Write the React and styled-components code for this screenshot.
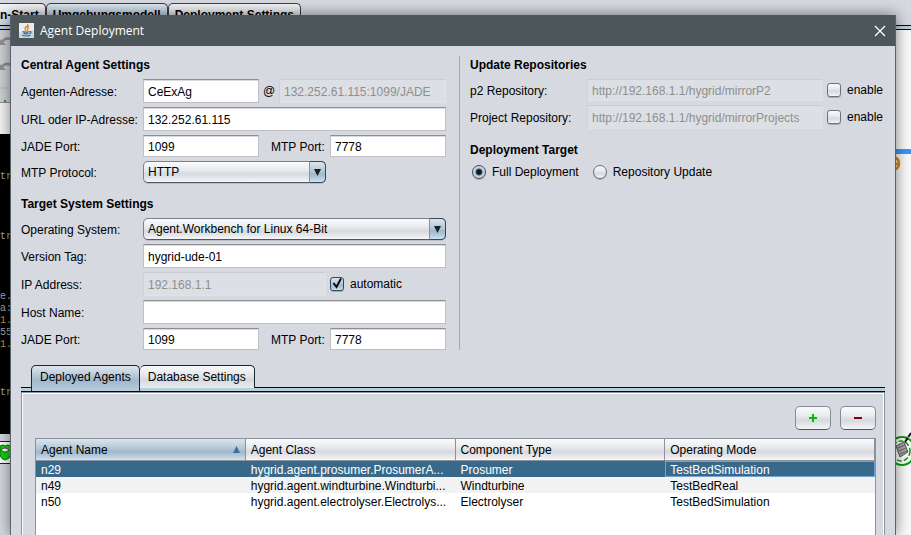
import React from "react";
import styled, { createGlobalStyle, css } from "styled-components";

const INK = "#000";
const PANEL = "#d6d9e0";
const BUTTON_FACE =
  "linear-gradient(#fbfbfc 0%, #e8eaed 40%, #d6d9de 60%, #e4e6ea 80%, #f6f7f9 100%)";
const BLUE_FACE =
  "linear-gradient(#dbe5ed 0%, #b4c7d6 45%, #a2b8cb 60%, #b3cadb 80%, #cfe4f2 100%)";

const GlobalStyle = createGlobalStyle`
  *, *::before, *::after { box-sizing: border-box; }
  html, body { margin: 0; overflow: hidden; }
  body {
    background: ${PANEL};
    color: ${INK};
    font: 12px/16px "Liberation Sans", Arial, sans-serif;
  }
  input, select, button { font: inherit; color: inherit; margin: 0; }
`;

/* ---------- application window behind the dialog ---------- */

const Desktop = styled.div`
  position: relative;
  height: 100vh;
  overflow: hidden;
`;

const Workbench = styled.div`
  height: 100%;
  display: flex;
  flex-direction: column;
`;

const WorkbenchTabs = styled.div`
  display: flex;
  padding-top: 3px;
  background: ${PANEL};
`;

const WorkbenchTab = styled.button`
  height: 22px;
  padding: ${(p) => (p.$first ? "0 6px 0 0" : "0 6px")};
  border: 1px solid #3a3e45;
  border-bottom: 0;
  border-left-width: ${(p) => (p.$first ? 0 : 1)}px;
  border-radius: ${(p) => (p.$first ? "0 5px 0 0" : "5px 5px 0 0")};
  background: ${(p) => (p.$active ? "linear-gradient(#dbe5ed, #a2b8cb)" : "linear-gradient(#f3f4f6, #d2d5db)")};
  font-weight: bold;
  line-height: 22px;
  white-space: nowrap;
`;

const TabRule = styled.div`
  height: 5px;
  flex: none;
  border: solid #05060f;
  border-width: 1px 0;
  background: #b9cfdd;
`;

const WorkArea = styled.div`
  flex: 1;
  min-height: 0;
  display: flex;
  justify-content: space-between;
  background: #fafafa;
`;

const LeftDock = styled.div`
  width: 24px;
  display: flex;
  flex-direction: column;
  overflow: hidden;
  background: ${PANEL};
`;

const DockTools = styled.div`
  height: 73px;
  border-bottom: 1px solid #8d9096;
  background: #d0d2d6;
`;

const DockPage = styled.div`
  height: 31px;
  background: #f7f7f7;
`;

const Console = styled.div`
  height: 300px;
  padding-top: 37px;
  background: #000;
  font: 10px/12px "Liberation Mono", monospace;
`;

const ConsoleLine = styled.div`
  height: 12px;
  color: ${(p) => (p.$warn ? "#d0903c" : "#a0a8b0")};
`;

const DockStatus = styled.div`
  margin-top: 7px;
  height: 23px;
  border: solid #202020;
  border-width: 1px 0;
  background: #fff;
`;

const RightDock = styled.div`
  width: 20px;
  background: #fafafa;
`;

const LinkBar = styled.div`
  height: 5px;
  margin-top: 119px;
  background: #3a97f5;
`;

const NodeMark = styled.svg`
  display: block;
  width: 20px;
  height: ${(p) => p.$h}px;
  margin-top: ${(p) => p.$gap}px;
`;

/* ---------- dialog frame ---------- */

const Dialog = styled.section`
  position: absolute;
  inset: 15px 15px 0 10px;
  display: flex;
  flex-direction: column;
  border: solid #59636a;
  border-width: 0 1px;
  background: ${PANEL};
  box-shadow: 0 0 14px rgba(0, 0, 0, 0.5);
`;

const TitleBar = styled.header`
  height: 31px;
  flex: none;
  display: flex;
  align-items: center;
  gap: 6px;
  padding: 0 9px 0 8px;
  background: #4c565b;
  color: #fff;
`;

const Title = styled.h1`
  flex: 1;
  margin: 0;
  font: 12px/16px "Open Sans", "Noto Sans", sans-serif;
`;

const CloseButton = styled.button`
  display: flex;
  padding: 0;
  border: 0;
  background: none;
`;

const DialogBody = styled.div`
  flex: 1;
  min-height: 0;
  display: flex;
  flex-direction: column;
  padding: 10px 10px 0;
`;

/* ---------- settings forms ---------- */

const SettingsGrid = styled.div`
  display: grid;
  grid-template-columns: minmax(0, 438fr) 1px minmax(0, 425fr);
`;

const SettingsColumn = styled.div`
  display: flex;
  flex-direction: column;
  gap: 4px;
  padding: ${(p) => (p.$side === "left" ? "0 13px 0 0" : "0 0 0 10px")};
`;

const Divider = styled.div`
  background: #a3a7b0;
`;

const Heading = styled.h2`
  height: 19px;
  margin: ${(p) => (p.$spaced ? 8 : 0)}px 0 0;
  font-size: 12px;
  line-height: 18px;
`;

const Row = styled.div`
  display: flex;
  align-items: center;
`;

const Label = styled.label`
  flex: none;
  width: ${(p) => p.$width}px;
  padding-top: 2px;
  line-height: 18px;
  white-space: nowrap;
`;

const MiddleLabel = styled(Label)`
  width: 71px;
  padding-left: 12px;
`;

const AtSign = styled.span`
  flex: none;
  width: 20px;
  text-align: center;
`;

const TextField = styled.input.attrs({ type: "text" })`
  flex: 1 1 0;
  min-width: 0;
  height: ${(p) => (p.$low ? 22 : 24)}px;
  padding: 1px 4px 0;
  border: 1px solid #c0c0c4;
  border-top-color: #8d8e8f;
  border-radius: 0;
  outline: 0;
  background: #fff;
  box-shadow: inset 0 1px 0 #d9dade;

  &:disabled {
    color: #8e8f91;
    -webkit-text-fill-color: #8e8f91;
    background: #dcdfe3;
    border-color: #cacdd2 #e0e2e6 #e0e2e6 #cdd0d6;
    box-shadow: none;
  }
`;

const AddressField = styled(TextField)`
  flex: 0 0 116px;
`;

const SelectBox = styled.div`
  position: relative;
  flex: 1;
  display: flex;
`;

const Select = styled.select`
  appearance: none;
  width: 100%;
  height: 22px;
  padding: 0 22px 0 4px;
  border: 1px solid #7c828c;
  border-bottom-color: #4f5661;
  border-radius: 5px;
  outline: 0;
  background: ${BUTTON_FACE};
  box-shadow: 0 1px 0 #b9bdc6;
`;

const SelectArrow = styled.span`
  position: absolute;
  inset: 0 0 0 auto;
  width: 17px;
  display: grid;
  place-items: center;
  border: 1px solid #33475b;
  border-left-color: #7f95a8;
  border-radius: 0 5px 5px 0;
  background: ${BLUE_FACE};
  pointer-events: none;
`;

const Spacer = styled.div`
  flex: none;
  width: 120px;
`;

const Option = styled.label`
  flex: none;
  display: flex;
  align-items: center;
  gap: 6px;
  ${(p) =>
    p.$width &&
    css`
      width: ${p.$width}px;
      padding-left: 4px;
    `}
`;

const ToggleBox = styled.span`
  position: relative;
  display: flex;
`;

const Toggle = styled.input`
  appearance: none;
  width: 14px;
  height: 14px;
  border: 1px solid #6b717b;
  border-radius: 3px;
  background: ${BUTTON_FACE};
  box-shadow: 0 1px 0 #a9adb6;

  &:checked {
    border-color: #35485b;
    background: ${BLUE_FACE};
  }
`;

const RadioToggle = styled(Toggle)`
  border-radius: 50%;

  &:checked {
    background: radial-gradient(circle, #10161c 0 2px, #46586a 3px, #b9cbd9 4px, #dbe6ee 7px);
  }
`;

const CheckMark = styled.svg`
  position: absolute;
  left: 0;
  top: -1px;
  pointer-events: none;
`;

const Radios = styled.div`
  display: flex;
  gap: 14px;
  height: 16px;
  padding-left: 2px;
`;

/* ---------- lower tab pane ---------- */

const Tabs = styled.div`
  display: flex;
  margin-top: 15px;
  padding-left: 10px;
`;

const Tab = styled.button`
  position: relative;
  height: ${(p) => (p.$active ? 26 : 23)}px;
  margin-bottom: ${(p) => (p.$active ? -4 : -1)}px;
  padding: 0 8px ${(p) => (p.$active ? 3 : 0)}px;
  border: 1px solid #1c2530;
  border-bottom: 0;
  border-left-width: ${(p) => (p.$active ? 1 : 0)}px;
  border-radius: 5px 5px 0 0;
  background: ${(p) =>
    p.$active
      ? "linear-gradient(#dde7ee, #b0c3d3 45%, #a3b8cb 60%, #b9cfdd)"
      : "linear-gradient(#f7f8f9, #e1e3e7 50%, #d4d7dc 60%, #e9ebee)"};
  white-space: nowrap;
`;

const TabPanel = styled.div`
  flex: 1;
  min-height: 0;
  display: flex;
  flex-direction: column;
  padding: 13px 8px 0 13px;
  border: 1px solid #8f939c;
  border-bottom: 0;
  box-shadow: inset 1px 1px 0 #fff, inset -1px 0 0 #fff;
`;

const Toolbar = styled.div`
  display: flex;
  justify-content: flex-end;
  gap: 9px;
  margin-bottom: 8px;
`;

const ToolButton = styled.button`
  display: grid;
  place-items: center;
  width: 36px;
  height: 24px;
  padding: 0;
  border: 1px solid #868b94;
  border-bottom-color: #4f555f;
  border-radius: 5px;
  background: ${BUTTON_FACE};
`;

const TableFrame = styled.div`
  flex: 1;
  min-height: 0;
  border: 1px solid #8c919a;
  border-bottom: 0;
  background: #fff;
  overflow: hidden;
`;

const AgentTable = styled.table`
  width: 100%;
  table-layout: fixed;
  border-collapse: separate;
  border-spacing: 0;
`;

const HeaderCell = styled.th`
  height: 22px;
  padding: 0 5px;
  border-right: 1px solid #8c919a;
  border-bottom: 1px solid #8c919a;
  background: ${(p) => (p.$sorted ? BLUE_FACE : BUTTON_FACE)};
  font-weight: normal;
  text-align: left;
  white-space: nowrap;
`;

const HeaderContent = styled.span`
  display: flex;
  align-items: center;
  justify-content: space-between;
`;

const BodyRow = styled.tr`
  background: #fff;
  &:nth-child(even) { background: #f2f2f2; }
  ${(p) =>
    p.$selected &&
    css`
      background: #39698a;
      color: #fff;
    `}
`;

const BodyCell = styled.td`
  height: 16px;
  padding: 2px 5px 0;
  line-height: 14px;
  white-space: nowrap;
  overflow: hidden;
  box-shadow: ${(p) => (p.$focused ? "inset 0 0 0 1px #73a4d1" : "none")};
`;

/* ---------- drawings ---------- */

const JavaIcon = () => (
  <svg width="15" height="15" viewBox="0 0 15 15" aria-hidden="true">
    <rect width="15" height="15" fill="#e9edf0" />
    <path d="M0 15V9Q7 12 15 7v8z" fill="#c9d7e2" />
    <path d="M8.5 1.2C10 3 5.4 4 6 5.800c.3.900 1.100 1.300 1.300 2.200M10.300 3.400C8.500 4 8 4.800 8.800 5.700c.5.600.200 1.300-.4 2" fill="none" stroke="#e8852d" strokeWidth="1.400" />
    <path d="M3.500 8.700q3.500 1 6.500 0M4.500 10.400q2.500.8 5 0M3 12.300q4.500 1.500 8.500-.2M10.300 8.600c2.400-.6 2.400 1.500.2 2.200" fill="none" stroke="#3f6787" strokeWidth="1.200" />
  </svg>
);

const CloseIcon = () => (
  <svg width="12" height="12" viewBox="0 0 12 12" aria-hidden="true">
    <path d="M1 1l10 10M11 1L1 11" stroke="#fff" strokeWidth="1.300" />
  </svg>
);

const DownArrow = () => (
  <svg width="7" height="7" viewBox="0 0 7 7" aria-hidden="true">
    <path d="M0 0h7L3.500 7z" fill="#14202a" />
  </svg>
);

const SortArrow = () => (
  <svg width="7" height="7" viewBox="0 0 7 7" aria-hidden="true">
    <path d="M0 7h7L3.500 0z" fill="#3b6f9d" />
  </svg>
);

const PlusIcon = () => (
  <svg width="8" height="8" viewBox="0 0 8 8" aria-hidden="true">
    <path d="M0 3h3V0h2v3h3v2H5v3H3V5H0z" fill="#00c000" />
  </svg>
);

const MinusIcon = () => (
  <svg width="8" height="8" viewBox="0 0 8 8" aria-hidden="true">
    <path d="M0 3h8v2H0z" fill="#8b0000" />
  </svg>
);

const ToolArrows = () => (
  <svg width="11" height="72" viewBox="0 0 11 72" aria-hidden="true">
    <g fill="none" stroke="#8f9195" strokeWidth="2.500">
      <path d="M2 12q3-5 9-3" />
      <path d="M2 37q3-5 9-2" />
    </g>
    <path d="M0 9v6h6zM0 34v6h6z" fill="#8f9195" />
    <path d="M1 58h10" stroke="#8b8e94" strokeDasharray="1 2" />
    <path d="M4 71h2" stroke="#14b414" strokeWidth="2" />
  </svg>
);

const StatusIcon = () => (
  <svg width="11" height="21" viewBox="0 0 11 21" aria-hidden="true">
    <path d="M0 4q3-2 5 0 3-2 6 0v8q-1 5-6 6-4-1-5-5z" fill="#12cf12" stroke="#087008" />
    <path d="M1 8q4-4 8 0-4 4-8 0z" fill="#fff" stroke="#333" strokeWidth=".8" />
  </svg>
);

/* ---------- data ---------- */

const consoleLines = [
  "tre", "", "", "", "", "tre", "", "", "", "", "e.", "a:", "1.", "55", "1.", "", "", "", "tre",
];

const columns = ["Agent Name", "Agent Class", "Component Type", "Operating Mode"];

const agents = [
  ["n29", "hygrid.agent.prosumer.ProsumerA...", "Prosumer", "TestBedSimulation"],
  ["n49", "hygrid.agent.windturbine.Windturbi...", "Windturbine", "TestBedReal"],
  ["n50", "hygrid.agent.electrolyser.Electrolys...", "Electrolyser", "TestBedSimulation"],
];

/* ---------- composed parts ---------- */

function Combo({ id, value }) {
  return (
    <SelectBox>
      <Select id={id} defaultValue={value}>
        <option>{value}</option>
      </Select>
      <SelectArrow>
        <DownArrow />
      </SelectArrow>
    </SelectBox>
  );
}

function CheckOption({ label, checked, width }) {
  return (
    <Option $width={width}>
      <ToggleBox>
        <Toggle type="checkbox" defaultChecked={checked} />
        {checked && (
          <CheckMark width="14" height="14" viewBox="0 0 14 14" aria-hidden="true">
            <path d="M3.500 7l3 4L11 2.500" fill="none" stroke="#000" strokeWidth="1.800" />
          </CheckMark>
        )}
      </ToggleBox>
      {label}
    </Option>
  );
}

function PortRow({ id }) {
  return (
    <Row>
      <Label $width={122} htmlFor={`${id}-jade`}>JADE Port:</Label>
      <TextField $low id={`${id}-jade`} defaultValue="1099" />
      <MiddleLabel htmlFor={`${id}-mtp`}>MTP Port:</MiddleLabel>
      <TextField $low id={`${id}-mtp`} defaultValue="7778" />
    </Row>
  );
}

function LeftSettings() {
  return (
    <SettingsColumn $side="left">
      <Heading>Central Agent Settings</Heading>
      <Row>
        <Label $width={122} htmlFor="agent-name">Agenten-Adresse:</Label>
        <AddressField id="agent-name" defaultValue="CeExAg" />
        <AtSign>@</AtSign>
        <TextField disabled aria-label="Platform" defaultValue="132.252.61.115:1099/JADE" />
      </Row>
      <Row>
        <Label $width={122} htmlFor="url">URL oder IP-Adresse:</Label>
        <TextField id="url" defaultValue="132.252.61.115" />
      </Row>
      <PortRow id="central" />
      <Row>
        <Label $width={122} htmlFor="protocol">MTP Protocol:</Label>
        <Combo id="protocol" value="HTTP" />
        <Spacer />
      </Row>
      <Heading $spaced>Target System Settings</Heading>
      <Row>
        <Label $width={122} htmlFor="os">Operating System:</Label>
        <Combo id="os" value="Agent.Workbench for Linux 64-Bit" />
      </Row>
      <Row>
        <Label $width={122} htmlFor="version">Version Tag:</Label>
        <TextField id="version" defaultValue="hygrid-ude-01" />
      </Row>
      <Row>
        <Label $width={122} htmlFor="ip">IP Address:</Label>
        <TextField id="ip" disabled defaultValue="192.168.1.1" />
        <CheckOption width={120} label="automatic" checked />
      </Row>
      <Row>
        <Label $width={122} htmlFor="host">Host Name:</Label>
        <TextField id="host" />
      </Row>
      <PortRow id="target" />
    </SettingsColumn>
  );
}

function RightSettings() {
  return (
    <SettingsColumn $side="right">
      <Heading>Update Repositories</Heading>
      <Row>
        <Label $width={117} htmlFor="p2">p2 Repository:</Label>
        <TextField $low id="p2" disabled defaultValue="http://192.168.1.1/hygrid/mirrorP2" />
        <CheckOption width={62} label="enable" />
      </Row>
      <Row>
        <Label $width={117} htmlFor="project">Project Repository:</Label>
        <TextField id="project" disabled defaultValue="http://192.168.1.1/hygrid/mirrorProjects" />
        <CheckOption width={62} label="enable" />
      </Row>
      <Heading $spaced>Deployment Target</Heading>
      <Radios>
        <Option>
          <RadioToggle type="radio" name="target" defaultChecked />
          Full Deployment
        </Option>
        <Option>
          <RadioToggle type="radio" name="target" />
          Repository Update
        </Option>
      </Radios>
    </SettingsColumn>
  );
}

function Agents() {
  return (
    <TableFrame>
      <AgentTable>
        <thead>
          <tr>
            {columns.map((name, i) => (
              <HeaderCell key={name} scope="col" $sorted={i === 0}>
                <HeaderContent>
                  {name}
                  {i === 0 && <SortArrow />}
                </HeaderContent>
              </HeaderCell>
            ))}
          </tr>
        </thead>
        <tbody>
          {agents.map((agent, r) => (
            <BodyRow key={agent[0]} $selected={r === 0}>
              {agent.map((text, c) => (
                <BodyCell key={c} $focused={r === 0 && c === 3}>{text}</BodyCell>
              ))}
            </BodyRow>
          ))}
        </tbody>
      </AgentTable>
    </TableFrame>
  );
}

function Background() {
  return (
    <Workbench>
      <WorkbenchTabs>
        <WorkbenchTab $first>n-Start</WorkbenchTab>
        <WorkbenchTab $active>Umgebungsmodell</WorkbenchTab>
        <WorkbenchTab>Deployment Settings</WorkbenchTab>
      </WorkbenchTabs>
      <TabRule />
      <WorkArea>
        <LeftDock>
          <DockTools><ToolArrows /></DockTools>
          <DockPage />
          <Console>
            {consoleLines.map((line, i) => (
              <ConsoleLine key={i} $warn={line === "1."}>{line}</ConsoleLine>
            ))}
          </Console>
          <DockStatus><StatusIcon /></DockStatus>
        </LeftDock>
        <RightDock>
          <LinkBar />
          <NodeMark $h={15} $gap={2} viewBox="0 0 20 15" aria-hidden="true">
            <path d="M2 1q6 1 6 6.500T2 14M3 8h5" fill="none" stroke="#d98a12" strokeWidth="2.500" />
          </NodeMark>
          <NodeMark $h={36} $gap={261} viewBox="0 0 20 36" aria-hidden="true">
            <ellipse cx="11" cy="19" rx="13" ry="14" fill="#fff" stroke="#0b9a0b" strokeWidth="2" />
            <ellipse cx="10" cy="19" rx="9" ry="10" fill="none" stroke="#0b9a0b" strokeWidth="1.500" strokeDasharray="5 2" />
            <path d="M5 14l8-4 4 10-8 5z" fill="#a9a9a9" stroke="#555" />
            <path d="M7 16l7-3M8 19l7-3M9 22l7-3" stroke="#666" />
            <path d="M14 10l6-9" stroke="#111" strokeWidth="2" strokeDasharray="5 1" />
          </NodeMark>
        </RightDock>
      </WorkArea>
    </Workbench>
  );
}

export default function App() {
  return (
    <Desktop>
      <GlobalStyle />
      <Background />
      <Dialog role="dialog" aria-label="Agent Deployment">
        <TitleBar>
          <JavaIcon />
          <Title>Agent Deployment</Title>
          <CloseButton aria-label="Close"><CloseIcon /></CloseButton>
        </TitleBar>
        <DialogBody>
          <SettingsGrid>
            <LeftSettings />
            <Divider />
            <RightSettings />
          </SettingsGrid>
          <Tabs role="tablist">
            <Tab role="tab" aria-selected="true" $active>Deployed Agents</Tab>
            <Tab role="tab" aria-selected="false">Database Settings</Tab>
          </Tabs>
          <TabRule />
          <TabPanel role="tabpanel">
            <Toolbar>
              <ToolButton aria-label="Add agent"><PlusIcon /></ToolButton>
              <ToolButton aria-label="Remove agent"><MinusIcon /></ToolButton>
            </Toolbar>
            <Agents />
          </TabPanel>
        </DialogBody>
      </Dialog>
    </Desktop>
  );
}
